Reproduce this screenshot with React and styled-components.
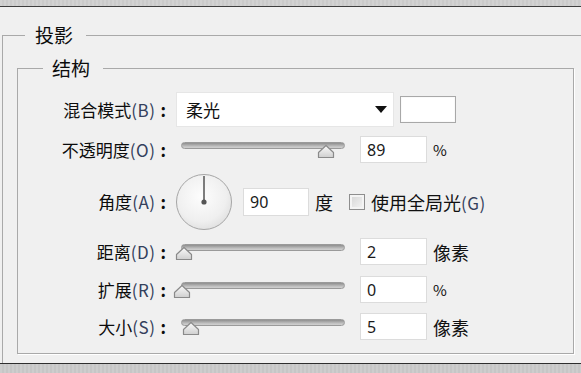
import React from "react";
import styled, { createGlobalStyle } from "styled-components";

const GlobalStyle = createGlobalStyle`
  html, body {
    margin: 0;
    padding: 0;
    background: #f0f0f0;
  }
  body {
    font-family: "Noto Sans CJK SC", "Noto Sans", sans-serif;
    color: #151515;
  }
`;

// at = thumb position along the 164px track
const sliders = [
  { key: "dist", label: "距离", hot: "D", value: "2", unit: "像素", at: 0.021, mt: 8 },
  { key: "spread", label: "扩展", hot: "R", value: "0", unit: "%", at: 0.006, mt: 11 },
  { key: "size", label: "大小", hot: "S", value: "5", unit: "像素", at: 0.058, mt: 10 },
];

function Thumb({ at }) {
  return (
    <ThumbWrap style={{ left: 5 + at * 164 - 9 }}>
      <svg width="18" height="15" viewBox="0 0 18 15">
        <defs>
          <linearGradient id="thumbFill" x1="0" y1="0" x2="0" y2="1">
            <stop offset="0" stopColor="#fbfbfb" />
            <stop offset="1" stopColor="#cfcfcf" />
          </linearGradient>
        </defs>
        <path
          d="M1.5 13.5 L1.5 8.5 L9 1.5 L16.5 8.5 L16.5 13.5 Z"
          fill="url(#thumbFill)"
          stroke="#8a8a8a"
          strokeWidth="1.2"
          strokeLinejoin="round"
        />
      </svg>
    </ThumbWrap>
  );
}

function Slider({ at }) {
  return (
    <SliderBox>
      <Track />
      <Thumb at={at} />
    </SliderBox>
  );
}

function Dial() {
  return (
    <DialBox>
      <svg width="58" height="58" viewBox="0 0 58 58">
        <defs>
          <radialGradient id="dialFill" cx="0.45" cy="0.4" r="0.65">
            <stop offset="0" stopColor="#fdfdfd" />
            <stop offset="0.7" stopColor="#efefef" />
            <stop offset="1" stopColor="#dedede" />
          </radialGradient>
        </defs>
        <circle cx="29" cy="29" r="27.5" fill="url(#dialFill)" stroke="#a6a6a6" strokeWidth="1" />
        <line x1="29" y1="29" x2="29" y2="3" stroke="#5e5e5e" strokeWidth="1.6" />
        <circle cx="29" cy="29" r="2.6" fill="#555" />
      </svg>
    </DialBox>
  );
}

function LabelText({ text, hot }) {
  return (
    <Label>
      {text}
      <Hot>({hot})</Hot>
      <Colon>:</Colon>
    </Label>
  );
}

export default function App() {
  return (
    <>
      <GlobalStyle />
      <Page>
        <TopStrip />
        <Panel>
          <Outer>
            <OuterLegend>投影</OuterLegend>
            <Inner>
              <InnerLegend>结构</InnerLegend>

              <Row h={35}>
                <LabelText text="混合模式" hot="B" />
                <Dropdown>
                  <span>柔光</span>
                  <Arrow />
                </Dropdown>
                <Swatch />
              </Row>

              <Row h={27} mt={9}>
                <LabelText text="不透明度" hot="O" />
                <Slider at={0.885} />
                <NumInput>89</NumInput>
                <Unit small>%</Unit>
              </Row>

              <Row h={56} mt={11}>
                <LabelText text="角度" hot="A" />
                <Dial />
                <NumInput w={66} h={28}>90</NumInput>
                <Unit>度</Unit>
                <Check />
                <CheckText>
                  使用全局光<Hot>(G)</Hot>
                </CheckText>
              </Row>

              {sliders.map((s) => (
                <Row key={s.key} h={27} mt={s.mt}>
                  <LabelText text={s.label} hot={s.hot} />
                  <Slider at={s.at} />
                  <NumInput>{s.value}</NumInput>
                  <Unit small={s.unit === "%"}>{s.unit}</Unit>
                </Row>
              ))}
            </Inner>
          </Outer>
        </Panel>
        <BottomStrip />
      </Page>
    </>
  );
}

const Page = styled.div`
  width: 581px;
  height: 373px;
  display: flex;
  flex-direction: column;
  overflow: hidden;
`;

const TopStrip = styled.div`
  height: 6px;
  flex-shrink: 0;
  background: repeating-linear-gradient(90deg, #d2d2d2 0 2px, #cbcbcb 2px 4px);
  border-bottom: 1px solid #3e3e3e;
`;

const BottomStrip = styled.div`
  height: 9px;
  flex-shrink: 0;
  background: repeating-linear-gradient(90deg, #cdcdcd 0 2px, #c6c6c6 2px 4px);
  border-top: 1px solid #2e2e2e;
`;

const Panel = styled.div`
  height: 356px;
  flex-shrink: 0;
  box-sizing: border-box;
  padding-top: 17px;
  display: flex;
  flex-direction: column;
  background: #f0f0f0;
`;

const Outer = styled.fieldset`
  flex: 1;
  margin: 0 0 0 2px;
  padding: 0 0 0 14px;
  border: 1px solid #a9a9a9;
  border-right: none;
  border-bottom: none;
  min-width: 0;
`;

const OuterLegend = styled.legend`
  margin-left: 8px;
  padding: 0 13px 0 10px;
  font-size: 19px;
  line-height: 22px;
  color: #0c0c0c;
`;

const Inner = styled.fieldset`
  width: 557px;
  box-sizing: border-box;
  margin: 11px 0 0 0;
  padding: 13px 0 0 0;
  height: 297px;
  border: 1px solid #a9a9a9;
  box-shadow: 1px 1px 0 #fff;
`;

const InnerLegend = styled.legend`
  margin-left: 25px;
  padding: 0 13px 0 9px;
  font-size: 19px;
  line-height: 22px;
  color: #0c0c0c;
`;

const Row = styled.div`
  display: flex;
  align-items: center;
  height: ${(p) => p.h}px;
  margin-top: ${(p) => p.mt || 0}px;
`;

const Label = styled.div`
  width: 148px;
  flex-shrink: 0;
  text-align: right;
  font-size: 17px;
  line-height: 22px;
  color: #0c0c0c;
  white-space: nowrap;
  padding-right: 3px;
  margin-right: 7px;
`;

const Hot = styled.span`
  font-size: 17px;
  letter-spacing: 0.5px;
  color: #34405c;
`;

const Colon = styled.span`
  margin-left: 5px;
  font-weight: 700;
`;

const Dropdown = styled.div`
  width: 218px;
  height: 35px;
  box-sizing: border-box;
  background: #fff;
  border: 1px solid #e6e6e6;
  display: flex;
  align-items: center;
  justify-content: space-between;
  padding: 0 6px 0 9px;
  font-size: 17px;
  color: #111;
`;

const Arrow = styled.span`
  width: 0;
  height: 0;
  border-left: 6px solid transparent;
  border-right: 6px solid transparent;
  border-top: 7px solid #111;
`;

const Swatch = styled.div`
  width: 56px;
  height: 27px;
  box-sizing: border-box;
  margin-left: 6px;
  background: #fff;
  border: 1px solid #a8a8a8;
  box-shadow: inset 0 0 0 1px #fafafa;
`;

const SliderBox = styled.div`
  position: relative;
  width: 174px;
  height: 27px;
  flex-shrink: 0;
`;

const Track = styled.div`
  margin: 6px 0 0 5px;
  width: 164px;
  height: 7px;
  box-sizing: border-box;
  border-radius: 4px;
  border: 1px solid #9a9a9a;
  background: linear-gradient(#8f8f8f, #c2c2c2 70%, #d0d0d0);
`;

const ThumbWrap = styled.div`
  position: absolute;
  top: 8px;
  width: 18px;
  height: 15px;
  line-height: 0;
`;

const NumInput = styled.div`
  width: ${(p) => p.w || 67}px;
  height: ${(p) => p.h || 27}px;
  box-sizing: border-box;
  margin-left: 10px;
  padding-left: 6px;
  background: #fff;
  border: 1px solid #dcdcdc;
  display: flex;
  align-items: center;
  font-family: "Noto Sans", "DejaVu Sans", sans-serif;
  font-size: 16px;
  color: #1a1a1a;
`;

const Unit = styled.span`
  margin-left: 6px;
  font-size: ${(p) => (p.small ? 15 : 18)}px;
  color: #111;
`;

const DialBox = styled.div`
  width: 58px;
  height: 58px;
  margin-left: -1px;
  line-height: 0;
`;

const Check = styled.div`
  width: 16px;
  height: 16px;
  box-sizing: border-box;
  margin-left: 16px;
  border: 1px solid #8e8e8e;
  background: linear-gradient(135deg, #d4d4d4, #f6f6f6);
  box-shadow: inset 0 0 0 2px #f4f4f4;
`;

const CheckText = styled.span`
  margin-left: 6px;
  font-size: 18px;
  color: #111;
  white-space: nowrap;
`;
